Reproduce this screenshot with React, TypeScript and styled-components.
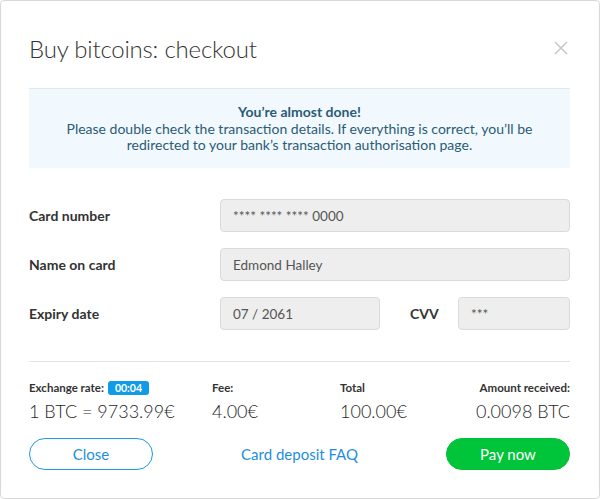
import React from "react";
import styled, { createGlobalStyle } from "styled-components";

const GlobalStyle = createGlobalStyle`
  html, body {
    margin: 0;
    padding: 0;
    background: #ffffff;
  }
  body {
    font-family: "Lato", "Open Sans", sans-serif;
    color: #333333;
  }
`;

const Modal = styled.div`
  box-sizing: border-box;
  width: 600px;
  height: 499px;
  border: 1px solid #d8d8d8;
  border-radius: 4px;
  background: #ffffff;
  padding: 0 29px 0 28px;
  display: flex;
  flex-direction: column;
`;

const Header = styled.div`
  box-sizing: border-box;
  display: flex;
  align-items: center;
  justify-content: space-between;
  height: 87px;
  padding-top: 7px;
`;

const Title = styled.h1`
  margin: 0;
  font-size: 24px;
  font-weight: 300;
  color: #333333;
  letter-spacing: -0.2px;
`;

const CloseIcon = styled.button`
  border: none;
  background: none;
  padding: 0;
  margin-right: 2px;
  width: 14px;
  height: 14px;
  display: flex;
  cursor: pointer;
`;

const Notice = styled.div`
  border-top: 1px solid #e3e7ea;
  background: #f1f9fe;
  height: 80px;
  box-sizing: border-box;
  padding-top: 15px;
  text-align: center;
  font-size: 14px;
  line-height: 16.5px;
  color: #2c5b74;
  strong {
    font-weight: 700;
  }
`;

const Form = styled.div`
  display: flex;
  flex-direction: column;
  gap: 16px;
  margin-top: 31px;
`;

const Row = styled.div`
  display: flex;
  align-items: center;
`;

const Label = styled.label<{ $width?: number }>`
  width: ${({ $width }) => $width ?? 191}px;
  font-size: 14px;
  font-weight: 700;
  color: #333333;
`;

const Field = styled.div<{ $width?: number }>`
  box-sizing: border-box;
  height: 33px;
  width: ${({ $width }) => ($width ? `${$width}px` : "auto")};
  flex: ${({ $width }) => ($width ? "none" : 1)};
  border: 1px solid #dadada;
  border-radius: 4px;
  background: #eeeeee;
  padding: 0 12px;
  display: flex;
  align-items: center;
  font-size: 13.5px;
  color: #555555;
`;

const CvvLabel = styled(Label)`
  padding-left: 30px;
`;

const Divider = styled.div`
  height: 1px;
  background: #e3e3e3;
  margin-top: 31px;
`;

const Summary = styled.div`
  display: grid;
  grid-template-columns: 183px 128px 1fr auto;
  margin-top: 18px;
`;

const Cell = styled.div<{ $right?: boolean }>`
  display: flex;
  flex-direction: column;
  align-items: ${({ $right }) => ($right ? "flex-end" : "flex-start")};
`;

const CellLabel = styled.div`
  display: flex;
  align-items: center;
  gap: 4px;
  height: 15px;
  font-size: 11.5px;
  font-weight: 700;
  color: #333333;
`;

const Timer = styled.span`
  background: #0f9be6;
  color: #ffffff;
  border-radius: 3px;
  font-size: 10.5px;
  font-weight: 700;
  padding: 1px 7px;
  line-height: 12px;
`;

const CellValue = styled.div`
  margin-top: 5px;
  font-size: 18px;
  font-weight: 300;
  color: #1e1e1e;
`;

const Actions = styled.div`
  display: flex;
  align-items: center;
  justify-content: space-between;
  margin-top: 16px;
`;

const Button = styled.button<{ $primary?: boolean }>`
  box-sizing: border-box;
  width: 124px;
  height: 32px;
  border-radius: 16px;
  font-family: inherit;
  font-size: 15px;
  cursor: pointer;
  border: 1px solid ${({ $primary }) => ($primary ? "#00c43a" : "#1d9ae2")};
  background: ${({ $primary }) => ($primary ? "#00c43a" : "#ffffff")};
  color: ${({ $primary }) => ($primary ? "#ffffff" : "#1d8fe0")};
`;

const FaqLink = styled.a`
  font-size: 15px;
  color: #1d8fe0;
  text-decoration: none;
  cursor: pointer;
`;

export default function App() {
  return (
    <>
      <GlobalStyle />
      <Modal>
        <Header>
          <Title>Buy bitcoins: checkout</Title>
          <CloseIcon aria-label="Close">
            <svg width="14" height="14" viewBox="0 0 14 14">
              <path d="M1 1L13 13M13 1L1 13" stroke="#c8c8c8" strokeWidth="1.6" />
            </svg>
          </CloseIcon>
        </Header>
        <Notice>
          <strong>You’re almost done!</strong>
          <br />
          Please double check the transaction details. If everything is correct, you’ll be
          <br />
          redirected to your bank’s transaction authorisation page.
        </Notice>
        <Form>
          <Row>
            <Label>Card number</Label>
            <Field>**** **** **** 0000</Field>
          </Row>
          <Row>
            <Label>Name on card</Label>
            <Field>Edmond Halley</Field>
          </Row>
          <Row>
            <Label>Expiry date</Label>
            <Field $width={160}>07 / 2061</Field>
            <CvvLabel $width={48}>CVV</CvvLabel>
            <Field>***</Field>
          </Row>
        </Form>
        <Divider />
        <Summary>
          <Cell>
            <CellLabel>
              Exchange rate: <Timer>00:04</Timer>
            </CellLabel>
            <CellValue>1 BTC = 9733.99€</CellValue>
          </Cell>
          <Cell>
            <CellLabel>Fee:</CellLabel>
            <CellValue>4.00€</CellValue>
          </Cell>
          <Cell>
            <CellLabel>Total</CellLabel>
            <CellValue>100.00€</CellValue>
          </Cell>
          <Cell $right>
            <CellLabel>Amount received:</CellLabel>
            <CellValue>0.0098 BTC</CellValue>
          </Cell>
        </Summary>
        <Actions>
          <Button>Close</Button>
          <FaqLink>Card deposit FAQ</FaqLink>
          <Button $primary>Pay now</Button>
        </Actions>
      </Modal>
    </>
  );
}
